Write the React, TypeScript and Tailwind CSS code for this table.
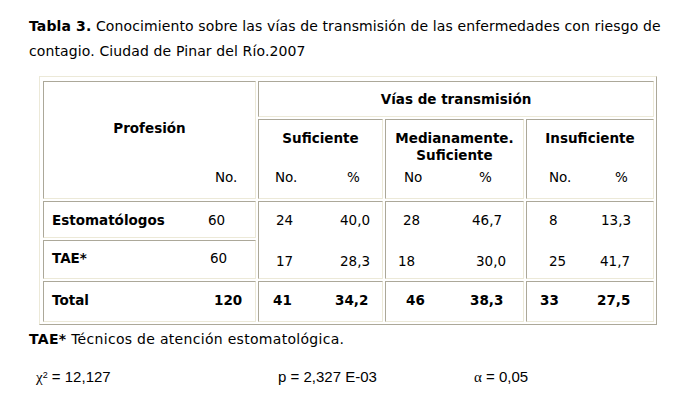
import clsx from "clsx";

const CELL =
  "border border-solid border-t-[#aca899] border-l-[#aca899] border-r-[#ece9d8] border-b-[#ece9d8] bg-white";

function Pair({ a, b, ca, className }: { a: string; b: string; ca: string; className?: string }) {
  return (
    <div className={clsx("flex leading-[17px]", className)}>
      <span className={clsx("shrink-0", ca)}>{a}</span>
      <span>{b}</span>
    </div>
  );
}

export default function App() {
  return (
    <main className="h-[404px] w-[697px] bg-white font-['DejaVu_Sans',sans-serif] text-black">
      <p className="whitespace-nowrap pl-[29px] pt-[14px] text-[14px] leading-[25px] tracking-[0.12px]">
        <b>Tabla 3.</b> Conocimiento sobre las vías de transmisión de las enfermedades con riesgo de
        <br />
        contagio. Ciudad de Pinar del Río.2007
      </p>

      <div className="ml-[39px] mt-[12px] w-fit border border-solid border-t-[#ece9d8] border-l-[#ece9d8] border-r-[#aca899] border-b-[#aca899] pb-[2px] pl-[3px] pr-[2px] pt-[4px]">
        <div className="grid grid-cols-[213px_125px_139px_128px] grid-rows-[36px_80px_37px_39px_41px] gap-[2px] text-[13.5px]">
          {/* cabecera */}
          <div className={clsx(CELL, "row-span-2 flex flex-col pt-[38px]")}>
            <div className="h-[49px] text-center font-bold leading-[17px]">Profesión</div>
            <div className="pl-[171px] leading-[17px]">No.</div>
          </div>
          <div className={clsx(CELL, "col-span-3 flex items-center justify-center font-bold")}>
            Vías de transmisión
          </div>
          <div className={clsx(CELL, "flex flex-col pt-[10px]")}>
            <div className="h-[39px] text-center font-bold leading-[17px]">Suficiente</div>
            <Pair a="No." b="%" ca="w-[88px] pl-[16px]" />
          </div>
          <div className={clsx(CELL, "flex flex-col pt-[10px]")}>
            <div className="h-[39px] text-center font-bold leading-[17px]">
              Medianamente.
              <br />
              Suficiente
            </div>
            <Pair a="No" b="%" ca="w-[93px] pl-[18px]" />
          </div>
          <div className={clsx(CELL, "flex flex-col pt-[10px]")}>
            <div className="h-[39px] text-center font-bold leading-[17px]">Insuficiente</div>
            <Pair a="No." b="%" ca="w-[88px] pl-[22px]" />
          </div>

          {/* datos */}
          <div className={clsx(CELL, "pt-[10px]")}>
            <Pair a="Estomatólogos" b="60" ca="w-[164px] pl-[8px] font-bold" />
          </div>
          <div className={clsx(CELL, "row-span-2 flex flex-col pt-[10px]")}>
            <Pair a="24" b="40,0" ca="w-[81px] pl-[17px]" />
            <Pair a="17" b="28,3" ca="w-[81px] pl-[17px]" className="mt-[24px]" />
          </div>
          <div className={clsx(CELL, "row-span-2 flex flex-col pt-[10px]")}>
            <Pair a="28" b="46,7" ca="w-[86px] pl-[17px]" />
            <Pair a="18" b="30,0" ca="w-[90px] pl-[12px]" className="mt-[24px]" />
          </div>
          <div className={clsx(CELL, "row-span-2 flex flex-col pt-[10px]")}>
            <Pair a="8" b="13,3" ca="w-[74px] pl-[22px]" />
            <Pair a="25" b="41,7" ca="w-[73px] pl-[22px]" className="mt-[24px]" />
          </div>
          <div className={clsx(CELL, "pt-[9px]")}>
            <Pair a="TAE*" b="60" ca="w-[166px] pl-[8px] font-bold" />
          </div>

          {/* total */}
          <div className={clsx(CELL, "pt-[10px] font-bold")}>
            <Pair a="Total" b="120" ca="w-[170px] pl-[8px]" />
          </div>
          <div className={clsx(CELL, "pt-[10px] font-bold")}>
            <Pair a="41" b="34,2" ca="w-[76px] pl-[14px]" />
          </div>
          <div className={clsx(CELL, "pt-[10px] font-bold")}>
            <Pair a="46" b="38,3" ca="w-[84px] pl-[20px]" />
          </div>
          <div className={clsx(CELL, "pt-[10px] font-bold")}>
            <Pair a="33" b="27,5" ca="w-[70px] pl-[13px]" />
          </div>
        </div>
      </div>

      <p className="mt-[4px] whitespace-nowrap pl-[29px] text-[14px] leading-[20px] tracking-[0.3px]">
        <b>TAE*</b> Técnicos de atención estomatológica.
      </p>

      <div className="mt-[18px] flex whitespace-nowrap font-['Liberation_Sans',sans-serif] text-[15px] leading-[20px]">
        <span className="w-[278px] shrink-0 pl-[36px]">
          <span className="font-['Liberation_Serif',serif]">χ</span>
          <sup className="text-[9px]">2</sup> = 12,127
        </span>
        <span className="w-[196px] shrink-0">p = 2,327 E-03</span>
        <span>
          <span className="font-['Liberation_Serif',serif]">α</span> = 0,05
        </span>
      </div>
    </main>
  );
}
